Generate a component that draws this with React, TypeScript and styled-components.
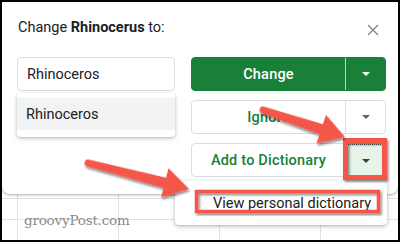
import React from "react";
import styled, { createGlobalStyle } from "styled-components";

const GlobalStyle = createGlobalStyle`
  html, body {
    margin: 0;
    padding: 0;
    background: #fff;
  }
  * {
    box-sizing: border-box;
  }
`;

const Frame = styled.div`
  position: relative;
  width: 400px;
  height: 242px;
  border: 2px solid #000;
  overflow: hidden;
  font-family: Roboto, "Liberation Sans", Arial, sans-serif;
  background-color: #fff;
  background-image: linear-gradient(to right, #e2e2e2 1px, transparent 1px),
    linear-gradient(to bottom, #e2e2e2 1px, transparent 1px);
  background-size: 101px 21px;
  background-position: 15px 7px;
`;

const Dialog = styled.section`
  position: relative;
  height: 192px;
  background: #fff;
  border-radius: 0 0 8px 8px;
  box-shadow: 0 1px 3px rgba(60, 64, 67, 0.3), 0 1px 2px rgba(60, 64, 67, 0.15);
  padding: 16px 12px 0 15px;
`;

const Header = styled.div`
  display: flex;
  align-items: center;
  justify-content: space-between;
  height: 20px;
  padding-left: 1px;
`;

const Title = styled.h1`
  margin: 0;
  font-size: 14.5px;
  font-weight: 400;
  color: #202124;
  line-height: 20px;
  b {
    font-weight: 700;
  }
`;

const Close = styled.button`
  border: 0;
  background: none;
  padding: 0;
  margin: 3px 7px 0 0;
  width: 12px;
  height: 12px;
  display: flex;
`;

const Body = styled.div`
  display: grid;
  grid-template-columns: 158px 195px;
  gap: 16px;
  margin-top: 19px;
`;

const InputWrap = styled.div`
  position: relative;
`;

const Input = styled.div`
  height: 34px;
  border: 1px solid #dadce0;
  border-radius: 4px;
  padding: 0 9px;
  display: flex;
  align-items: center;
  font-size: 14.5px;
  color: #202124;
`;

const Suggestions = styled.ul`
  position: absolute;
  top: 36px;
  left: 0;
  width: 158px;
  height: 44px;
  margin: 0;
  padding: 5px 0 0;
  list-style: none;
  background: #fff;
  border-radius: 4px;
  box-shadow: 0 1px 3px rgba(60, 64, 67, 0.3), 0 2px 6px rgba(60, 64, 67, 0.12);
`;

const Suggestion = styled.li<{ $selected?: boolean }>`
  height: 32px;
  padding: 0 9px;
  display: flex;
  align-items: center;
  font-size: 14.5px;
  color: #202124;
  background: ${(p) => (p.$selected ? "#f1f3f4" : "transparent")};
`;

const Actions = styled.div`
  display: flex;
  flex-direction: column;
  gap: 9px;
`;

const Split = styled.div<{ $primary?: boolean }>`
  display: flex;
  height: 34px;
  border-radius: 4px;
  overflow: hidden;
  background: ${(p) => (p.$primary ? "#188038" : "#fff")};
  border: 1px solid ${(p) => (p.$primary ? "#188038" : "#dadce0")};
`;

const MainPart = styled.div<{ $primary?: boolean }>`
  flex: 0 0 154px;
  display: flex;
  align-items: center;
  justify-content: center;
  font-size: 14.5px;
  font-weight: 500;
  letter-spacing: 0.2px;
  color: ${(p) => (p.$primary ? "#fff" : "#188038")};
  border-right: 1px solid
    ${(p) => (p.$primary ? "rgba(255,255,255,0.7)" : "#dadce0")};
`;

const CaretPart = styled.div<{ $active?: boolean }>`
  flex: 1;
  display: flex;
  align-items: center;
  justify-content: center;
  background: ${(p) => (p.$active ? "#e6f4ea" : "transparent")};
  border-top: ${(p) => (p.$active ? "1px dotted #5f6368" : "0")};
`;

const Caret = styled.span<{ $color: string }>`
  width: 0;
  height: 0;
  border-left: 4px solid transparent;
  border-right: 4px solid transparent;
  border-top: 4px solid ${(p) => p.$color};
`;

const Menu = styled.div`
  position: absolute;
  left: 173px;
  top: 179px;
  width: 212px;
  height: 44px;
  background: #fff;
  border-radius: 4px;
  box-shadow: 0 1px 3px rgba(60, 64, 67, 0.3), 0 2px 6px rgba(60, 64, 67, 0.15);
  display: flex;
  align-items: center;
  padding-left: 38px;
  font-size: 14.5px;
  color: #202124;
`;

const Watermark = styled.div`
  position: absolute;
  left: 22px;
  top: 210px;
  font-family: "DejaVu Serif", "Liberation Serif", serif;
  font-size: 13.5px;
  color: #8a8a8a;
  letter-spacing: -0.2px;
`;

const Overlay = styled.svg`
  position: absolute;
  left: -2px;
  top: -2px;
  width: 400px;
  height: 242px;
  pointer-events: none;
`;

const RED = "#f4564a";

function arrowPath(len: number, head: number, half: number) {
  return `M ${-len} -3.4 L ${-head} -5.2 L ${-head} ${-half} L 0 0 L ${-head} ${half} L ${-head} 5.2 L ${-len} 3.4 A 3.4 3.4 0 0 1 ${-len} -3.4 Z`;
}

function Arrow({ x1, y1, x2, y2 }: { x1: number; y1: number; x2: number; y2: number }) {
  const dx = x2 - x1;
  const dy = y2 - y1;
  const len = Math.sqrt(dx * dx + dy * dy);
  const angle = (Math.atan2(dy, dx) * 180) / Math.PI;
  return (
    <path
      d={arrowPath(len, 25, 15)}
      fill={RED}
      transform={`translate(${x2} ${y2}) rotate(${angle})`}
      filter="url(#shadow)"
    />
  );
}

export default function App() {
  return (
    <>
      <GlobalStyle />
      <Frame>
        <Dialog>
          <Header>
            <Title>
              Change <b>Rhinocerus</b> to:
            </Title>
            <Close aria-label="Close">
              <svg width="12" height="12" viewBox="0 0 12 12">
                <path d="M1 1 L11 11 M11 1 L1 11" stroke="#80868b" strokeWidth="1.4" />
              </svg>
            </Close>
          </Header>
          <Body>
            <InputWrap>
              <Input>Rhinoceros</Input>
              <Suggestions>
                <Suggestion $selected>Rhinoceros</Suggestion>
              </Suggestions>
            </InputWrap>
            <Actions>
              <Split $primary>
                <MainPart $primary>Change</MainPart>
                <CaretPart>
                  <Caret $color="#fff" />
                </CaretPart>
              </Split>
              <Split>
                <MainPart>Ignore</MainPart>
                <CaretPart>
                  <Caret $color="#5f6368" />
                </CaretPart>
              </Split>
              <Split>
                <MainPart>Add to Dictionary</MainPart>
                <CaretPart $active>
                  <Caret $color="#3c4043" />
                </CaretPart>
              </Split>
            </Actions>
          </Body>
        </Dialog>
        <Watermark>groovyPost.com</Watermark>
        <Menu>View personal dictionary</Menu>
        <Overlay viewBox="0 0 400 242">
          <defs>
            <filter id="shadow" x="-20%" y="-20%" width="140%" height="140%">
              <feDropShadow dx="1.5" dy="2" stdDeviation="1.2" floodColor="#000" floodOpacity="0.45" />
            </filter>
          </defs>
          <rect x="345.5" y="140.5" width="39" height="37" fill="none" stroke={RED} strokeWidth="5" filter="url(#shadow)" />
          <rect x="196.5" y="191.5" width="182" height="20" fill="none" stroke={RED} strokeWidth="3.5" filter="url(#shadow)" />
          <Arrow x1={263} y1={110} x2={345} y2={137} />
          <Arrow x1={88} y1={163} x2={189} y2={189} />
        </Overlay>
      </Frame>
    </>
  );
}
